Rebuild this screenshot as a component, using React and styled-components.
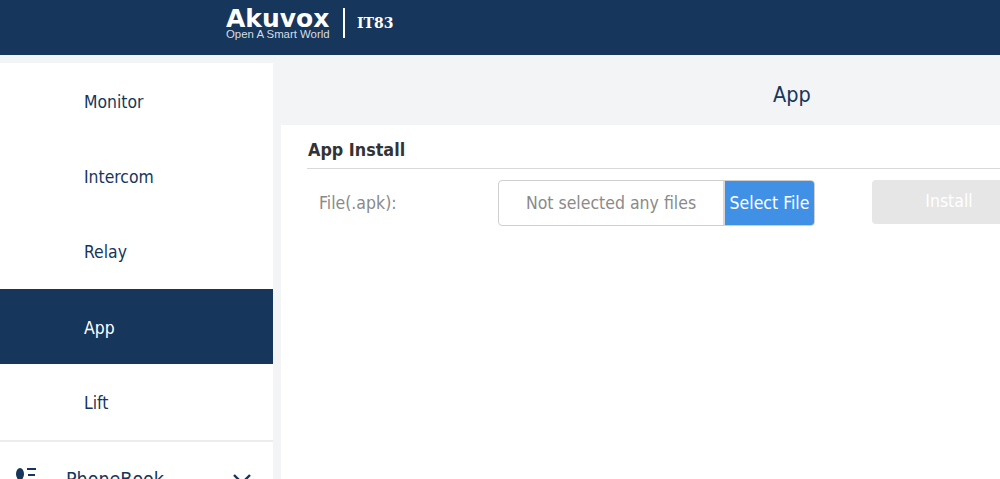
import React from "react";
import styled, { createGlobalStyle } from "styled-components";

const Global = createGlobalStyle`
  html, body { margin: 0; padding: 0; height: 479px; overflow: hidden; background: #f3f4f6; }
  * { box-sizing: border-box; }
  #root { height: 479px; overflow: hidden; font-family: "DejaVu Sans", "Noto Sans", sans-serif; font-stretch: condensed; }
`;

const Header = styled.header`
  height: 55px;
  background: #16365c;
  display: flex;
  align-items: center;
  padding-left: 226px;
  color: #fff;
`;
const Logo = styled.div`
  width: 105px;
  display: flex;
  flex-direction: column;
  margin-top: -7px;
`;
const LogoName = styled.div`
  font-family: "DejaVu Sans", sans-serif;
  font-stretch: normal;
  font-weight: 700;
  font-size: 25px;
  line-height: 21px;
`;
const LogoTag = styled.div`
  font-family: "Liberation Sans", sans-serif;
  font-stretch: normal;
  font-size: 11.4px;
  line-height: 11px;
  color: #d5dce5;
  white-space: nowrap;
`;
const Divider = styled.div`
  width: 2px;
  height: 30px;
  background: #fff;
  margin: -9px 12px 0 12px;
`;
const Model = styled.div`
  font-family: "DejaVu Serif", serif;
  font-stretch: normal;
  font-weight: 700;
  font-size: 14px;
  margin-top: -9px;
`;
const Body = styled.div`
  display: flex;
  margin-top: 8px;
  gap: 8px;
  height: 416px;
  overflow: hidden;
`;
const Sidebar = styled.nav`
  width: 273px;
  flex: none;
  background: #fff;
  display: flex;
  flex-direction: column;
`;
const MenuItem = styled.div`
  height: 75.3px;
  flex: none;
  display: flex;
  align-items: center;
  padding-left: 84px;
  padding-top: 2px;
  font-size: 17.4px;
  color: ${(p) => (p.$active ? "#fff" : "#16365c")};
  background: ${(p) => (p.$active ? "#16365c" : "#fff")};
`;
const Group = styled.div`
  border-top: 2px solid #ececec;
  margin-top: 1px;
  flex: none;
  display: flex;
  align-items: center;
  height: 76px;
  padding: 0 21px 0 13px;
  color: #16365c;
  font-size: 19.5px;
`;
const GroupLabel = styled.span`
  flex: 1;
  margin-left: 27px;
`;
const Main = styled.main`
  flex: none;
  width: 1022px;
  display: flex;
  flex-direction: column;
`;
const TitleBar = styled.div`
  height: 62px;
  flex: none;
  display: flex;
  align-items: center;
  justify-content: center;
  padding-top: 1px;
  font-size: 21.5px;
  color: #16365c;
`;
const Content = styled.section`
  flex: 1;
  background: #fff;
  padding-left: 26px;
`;
const SectionTitle = styled.h2`
  margin: 0;
  height: 44px;
  border-bottom: 1px solid #d9d9d9;
  display: flex;
  align-items: center;
  padding: 5px 0 0 1px;
  font-size: 17.8px;
  font-weight: 700;
  color: #333;
`;
const FormRow = styled.div`
  display: flex;
  align-items: flex-start;
  margin-top: 11px;
`;
const FieldLabel = styled.label`
  width: 191px;
  flex: none;
  height: 46px;
  display: flex;
  align-items: center;
  padding-left: 12px;
  font-size: 17.5px;
  color: #8a8a8a;
`;
const FilePicker = styled.div`
  width: 317px;
  height: 46px;
  flex: none;
  display: flex;
  border: 1px solid #cfcfcf;
  border-radius: 4px;
  overflow: hidden;
`;
const FileName = styled.div`
  flex: 1;
  display: flex;
  align-items: center;
  justify-content: center;
  font-size: 17.5px;
  color: #8a8a8a;
  border-right: 2px solid #d8d8d8;
`;
const SelectButton = styled.button`
  width: 89px;
  border: 0;
  padding: 0;
  background: #4091e5;
  color: #fff;
  font: inherit;
  font-size: 17.5px;
`;
const InstallButton = styled.button`
  width: 154px;
  height: 44px;
  margin-left: 57px;
  flex: none;
  border: 0;
  border-radius: 4px;
  background: #e6e6e6;
  color: #fff;
  font: inherit;
  font-size: 17.5px;
  padding: 0 0 2px;
`;

const PersonIcon = () => (
  <svg width="26" height="24" viewBox="0 0 26 24" fill="#16365c">
    <ellipse cx="7" cy="7" rx="4" ry="6" />
    <path d="M0 20c0-4 3-6 7-6s7 2 7 6v2H0z" />
    <rect x="14" y="1" width="9" height="2" />
    <rect x="15" y="7" width="7" height="2" />
  </svg>
);

const Chevron = () => (
  <svg width="20" height="12" viewBox="0 0 20 12" fill="none" stroke="#16365c" strokeWidth="2.4">
    <path d="M2 2l8 8 8-8" />
  </svg>
);

const items = ["Monitor", "Intercom", "Relay", "App", "Lift"];

export default function App() {
  return (
    <>
      <Global />
      <Header>
        <Logo>
          <LogoName>Akuvox</LogoName>
          <LogoTag>Open A Smart World</LogoTag>
        </Logo>
        <Divider />
        <Model>IT83</Model>
      </Header>
      <Body>
        <Sidebar>
          {items.map((item) => (
            <MenuItem key={item} $active={item === "App"}>{item}</MenuItem>
          ))}
          <Group>
            <PersonIcon />
            <GroupLabel>PhoneBook</GroupLabel>
            <Chevron />
          </Group>
        </Sidebar>
        <Main>
          <TitleBar>App</TitleBar>
          <Content>
            <SectionTitle>App Install</SectionTitle>
            <FormRow>
              <FieldLabel>File(.apk):</FieldLabel>
              <FilePicker>
                <FileName>Not selected any files</FileName>
                <SelectButton>Select File</SelectButton>
              </FilePicker>
              <InstallButton>Install</InstallButton>
            </FormRow>
          </Content>
        </Main>
      </Body>
    </>
  );
}
